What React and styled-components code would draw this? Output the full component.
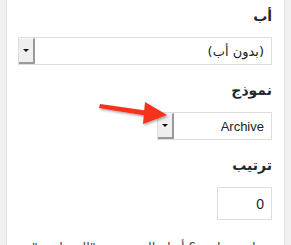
import React from 'react'
import styled, { createGlobalStyle } from 'styled-components'

const Global = createGlobalStyle`
    html, body {
        margin:0;
        padding:0;
        background:#f1f1f1;
        height:100%;
        overflow:hidden;
    }
`
const Panel = styled.div`
    position:relative;
    direction:rtl;
    margin:0 6px 0 6px;
    height:245px;
    overflow:hidden;
    background:#fff;
    border-left:1px solid #e5e5e5;
    border-right:1px solid #e5e5e5;
    padding:6px 12px 0 11px;
    box-sizing:border-box;
    font-family:"DejaVu Sans", "Liberation Sans", sans-serif;
    color:#23282d;
`
const Label = styled.div`
    font-size:14px;
    font-weight:bold;
    line-height:20px;
    margin-bottom:${p => p.gap}px;
`
const Select = styled.div`
    display:flex;
    align-items:stretch;
    width:${p => p.width}px;
    height:28px;
    box-sizing:border-box;
    border:1px solid #dddddd;
    background:#fff;
    margin-bottom:${p => p.gap}px;
    margin-left:auto;
`
const Value = styled.div`
    flex:1;
    display:flex;
    align-items:center;
    padding-right:7px;
    font-size:13px;
    color:#222;
    font-family:${p => p.latin ? '"Liberation Sans", "DejaVu Sans", sans-serif' : '"DejaVu Sans", sans-serif'};
`
const DropButton = styled.div`
    order:2;
    width:16px;
    box-sizing:border-box;
    background:#efefef;
    border-top:1px solid #fafafa;
    border-right:2px solid #9a9a9a;
    border-bottom:2px solid #9a9a9a;
    display:flex;
    align-items:center;
    justify-content:center;
`
const Caret = styled.span`
    width:0;
    height:0;
    border-left:3px solid transparent;
    border-right:3px solid transparent;
    border-top:3px solid #111;
`
const NumberBox = styled.div`
    width:55px;
    height:33px;
    box-sizing:border-box;
    border:1px solid #dddddd;
    display:flex;
    align-items:center;
    padding-right:7px;
    font-size:14px;
    font-family:"Liberation Sans", "DejaVu Sans", sans-serif;
    color:#222;
    margin-bottom:18px;
`
const Note = styled.p`
    margin:0;
    font-size:13px;
    line-height:20px;
    color:#444;
    white-space:nowrap;
`
const Arrow = styled.svg`
    position:absolute;
    left:84px;
    top:96px;
`

const Dropdown = ({ value, width, gap, latin }) => (
    <Select width={width} gap={gap}>
        <Value latin={latin}>{value}</Value>
        <DropButton><Caret/></DropButton>
    </Select>
)

const App = () => {
    return (
        <>
            <Global/>
            <Panel>
                <Label gap={11}>أب</Label>
                <Dropdown value="(بدون أب)" width={254} gap={15}/>
                <Label gap={12}>نموذج</Label>
                <Dropdown value="Archive" width={115} gap={15} latin/>
                <Label gap={12}>ترتيب</Label>
                <NumberBox>0</NumberBox>
                <Note>تحتاج مساعدة؟ أنظر إلى صفحة "المساعدة"</Note>
                <Arrow width="80" height="32" viewBox="0 0 80 32">
                    <defs>
                        <filter id="sh" x="-20%" y="-40%" width="140%" height="180%">
                            <feDropShadow dx="1" dy="1.5" stdDeviation="1.2" floodColor="#000" floodOpacity="0.35"/>
                        </filter>
                    </defs>
                    <g filter="url(#sh)" fill="#f5301c">
                        <polygon points="9,8 58,15 57,20 8,12"/>
                        <polygon points="54,6 76,19 52,28"/>
                    </g>
                </Arrow>
            </Panel>
        </>
    )
}

export default App
